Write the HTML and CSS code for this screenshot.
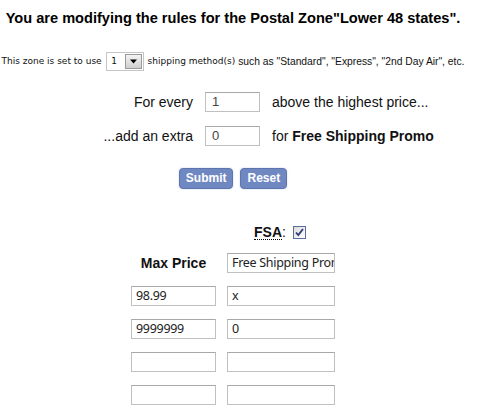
FILE: index.html
```html
<!DOCTYPE html>
<html>
<head>
<meta charset="utf-8">
<link rel="stylesheet" href="styles.css">
</head>
<body>
<div class="page">
  <h1 class="title">You are modifying the rules for the Postal Zone"Lower 48 states".</h1>
  <p class="zone"><span class="zone-a">This zone is set to use</span>
    <span class="select"><span class="select-val">1</span><span class="select-btn"><svg width="9" height="5" viewBox="0 0 9 5"><path d="M1 0.5h7L4.5 4.5z" fill="#000"/></svg></span></span>
    <span class="zone-b">shipping method(s)</span> <span class="zone-c">such as "Standard", "Express", "2nd Day Air", etc.</span></p>
  <div class="extra">
    <span class="lbl">For every</span>
    <span class="field small">1</span>
    <span class="desc">above the highest price...</span>
    <span class="lbl">...add an extra</span>
    <span class="field small">0</span>
    <span class="desc">for <b>Free Shipping Promo</b></span>
  </div>
  <div class="buttons">
    <span class="btn">Submit</span>
    <span class="btn">Reset</span>
  </div>
  <div class="rates">
    <div class="cell"></div>
    <div class="cell fsa"><abbr class="fsa-abbr">FSA</abbr>:<span class="check"><svg width="9" height="9" viewBox="0 0 9 9"><path d="M1 4.5l2.3 2.5L8 1" fill="none" stroke="#2a3b7a" stroke-width="1.8"/></svg></span></div>
    <div class="cell head">Max Price</div>
    <div class="cell"><span class="field">Free Shipping Promo</span></div>
    <div class="cell"><span class="field">98.99</span></div>
    <div class="cell"><span class="field">x</span></div>
    <div class="cell"><span class="field">9999999</span></div>
    <div class="cell"><span class="field">0</span></div>
    <div class="cell"><span class="field"></span></div>
    <div class="cell"><span class="field"></span></div>
    <div class="cell"><span class="field"></span></div>
    <div class="cell"><span class="field"></span></div>
  </div>
</div>
</body>
</html>
```
FILE: styles.css
```css
html, body {
  margin: 0;
  padding: 0;
  background: #ffffff;
}
body {
  font-family: "Liberation Sans", Arial, sans-serif;
  color: #111;
}
.page {
  width: 466px;
  text-align: center;
}
.title {
  margin: 0;
  padding-top: 10px;
  font-size: 14.6px;
  font-weight: bold;
  line-height: 16px;
  color: #000;
  white-space: nowrap;
}
.zone {
  margin: 26px -6px 0 -6px;
  font-size: 10px;
  line-height: 19px;
  white-space: nowrap;
  display: flex;
  align-items: center;
  justify-content: center;
  gap: 3px;
}
.zone-a, .zone-b {
  font-family: "DejaVu Sans", sans-serif;
  font-size: 9px;
}
.zone-c {
  font-size: 10.3px;
}
.select {
  display: inline-flex;
  width: 38px;
  height: 19px;
  box-sizing: border-box;
  border: 1px solid #c5c5c5;
  background: #fff;
  align-items: stretch;
  margin: 0 1px;
}
.select-val {
  flex: 1;
  font-family: "DejaVu Sans", sans-serif;
  font-size: 9px;
  line-height: 17px;
  text-align: center;
  padding-right: 2px;
}
.select-btn {
  width: 15px;
  margin: 1px;
  border: 1px solid #9a9a9a;
  background: linear-gradient(#f4f4f4, #cfcfcf);
  display: flex;
  align-items: center;
  justify-content: center;
}
.extra {
  display: grid;
  grid-template-columns: 193px 55px max-content;
  column-gap: 12px;
  row-gap: 14px;
  margin-top: 21px;
  font-size: 14px;
  align-items: center;
}
.lbl {
  text-align: right;
  color: #111;
}
.desc {
  text-align: left;
  color: #111;
}
.field {
  display: block;
  box-sizing: border-box;
  height: 20px;
  border: 1px solid #c0c0c0;
  border-top-color: #a8a8a8;
  background: #fff;
  text-align: left;
  padding-left: 4px;
  font-family: "Noto Sans", sans-serif;
  font-size: 12.5px;
  letter-spacing: -0.3px;
  line-height: 18px;
  color: #222;
  overflow: hidden;
  white-space: nowrap;
}
.field.small {
  font-family: "Liberation Sans", Arial, sans-serif;
  font-size: 13px;
  letter-spacing: 0;
  color: #444;
  padding-left: 6px;
}
.buttons {
  display: flex;
  justify-content: center;
  gap: 7px;
  margin-top: 22px;
}
.btn {
  display: inline-block;
  height: 21px;
  box-sizing: border-box;
  padding: 0 6px;
  border: 1px solid #5e74ac;
  border-radius: 4px;
  background: #7088c2;
  color: #fff;
  font-weight: bold;
  font-size: 12px;
  line-height: 19px;
  box-shadow: 0 0 2px #c4cde6;
}
.rates {
  display: grid;
  grid-template-columns: 85px 108px;
  column-gap: 11px;
  justify-content: center;
  row-gap: 13px;
  margin-top: 36px;
  align-items: center;
}
.cell {
  min-height: 14px;
}
.fsa {
  font-size: 14px;
  display: flex;
  align-items: center;
  justify-content: center;
  height: 14px;
  margin-bottom: 1px;
  padding-right: 2px;
}
.fsa-abbr {
  font-weight: bold;
  text-decoration: none;
  border-bottom: 1px dotted #000;
  line-height: 14px;
}
.check {
  display: inline-flex;
  width: 13px;
  height: 13px;
  box-sizing: border-box;
  border: 1px solid #5a6fa0;
  background: linear-gradient(135deg, #dcdcd7, #ffffff);
  margin-left: 7px;
  align-items: center;
  justify-content: center;
}
.head {
  font-weight: bold;
  font-size: 14px;
  text-align: center;
}
```
